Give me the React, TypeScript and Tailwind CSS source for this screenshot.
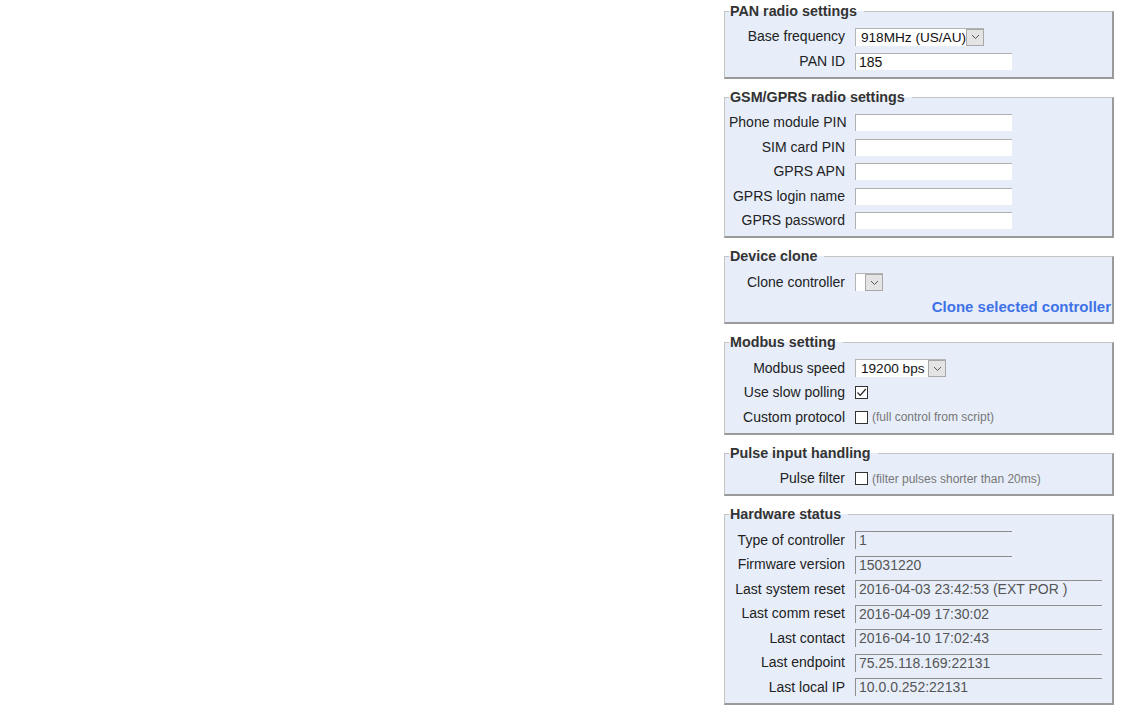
import React from "react";

const font = { fontFamily: '"Liberation Sans", Arial, sans-serif' };

function Arrow() {
  return (
    <span className="flex h-full w-[18px] shrink-0 items-center justify-center border border-[#a8a8a8] bg-[#e4e4e4]">
      <svg width="9" height="6" viewBox="0 0 9 6">
        <path d="M1 1 L4.5 4.5 L8 1" fill="none" stroke="#555" strokeWidth="1" />
      </svg>
    </span>
  );
}

function Select({ value, w }: { value: string; w: string }) {
  return (
    <div className={`flex h-[18px] items-stretch border-l border-t border-[#b4b4b4] bg-white ${w}`}>
      <span className="min-w-0 flex-1 overflow-hidden whitespace-nowrap pl-[5px] text-[13.6px] leading-[17px] text-[#111]">
        {value}
      </span>
      <Arrow />
    </div>
  );
}

function Input({ value = "" }: { value?: string }) {
  return (
    <div className="h-[17px] w-[157px] border-l border-t border-[#b0b0b0] bg-white pl-[3px] text-[14px] leading-[16px] text-[#111]">
      {value}
    </div>
  );
}

function ReadOnly({ value, wide }: { value: string; wide?: boolean }) {
  return (
    <div
      className={`h-[18px] border-l border-t-[1.5px] border-[#8e8e8e] pl-[3px] text-[14px] leading-[16px] text-[#555] ${
        wide ? "w-[247px]" : "w-[157px]"
      }`}
    >
      {value}
    </div>
  );
}

function Check({ checked }: { checked?: boolean }) {
  return (
    <span className="flex h-[13px] w-[13px] items-center justify-center border border-[#333] bg-white">
      {checked && (
        <svg width="11" height="11" viewBox="0 0 11 11">
          <path d="M1.5 5.5 L4.2 8.3 L9.8 2" fill="none" stroke="#222" strokeWidth="1.2" />
        </svg>
      )}
    </span>
  );
}

function Row({ label, children }: { label: string; children?: React.ReactNode }) {
  return (
    <div className="flex h-[24.5px] items-center">
      <span className="w-[116px] whitespace-nowrap text-right text-[14px] text-[#222]">{label}</span>
      <div className="ml-[10px] flex items-center">{children}</div>
    </div>
  );
}

function Box({ title, children }: { title: string; children: React.ReactNode }) {
  return (
    <fieldset className="mb-[10px] w-[390px] border-b-2 border-l border-r-2 border-t border-b-[#9a9a9a] border-l-[#c4c4c4] border-r-[#9a9a9a] border-t-[#c4c4c4] bg-[#e7eefa] px-[4px]">
      <legend className="pl-[1px] pr-[7px] text-[14.3px] font-bold leading-[17px] text-[#333]">{title}</legend>
      <div className="pb-[3px] pt-[5px]">{children}</div>
    </fieldset>
  );
}

export default function App() {
  return (
    <div className="min-h-[714px] bg-white pl-[724px] pt-[2.5px]" style={font}>
      <Box title="PAN radio settings">
        <Row label="Base frequency">
          <Select value="918MHz (US/AU)" w="w-[129px]" />
        </Row>
        <Row label="PAN ID">
          <Input value="185" />
        </Row>
      </Box>

      <Box title="GSM/GPRS radio settings">
        <Row label="Phone module PIN">
          <Input />
        </Row>
        <Row label="SIM card PIN">
          <Input />
        </Row>
        <Row label="GPRS APN">
          <Input />
        </Row>
        <Row label="GPRS login name">
          <Input />
        </Row>
        <Row label="GPRS password">
          <Input />
        </Row>
      </Box>

      <Box title="Device clone">
        <Row label="Clone controller">
          <Select value="" w="w-[28px]" />
        </Row>
        <div className="-mr-[3px] flex h-[24.5px] items-center justify-end">
          <a className="cursor-pointer whitespace-nowrap text-[15px] font-bold text-[#3f72e6]">Clone selected controller</a>
        </div>
      </Box>

      <Box title="Modbus setting">
        <Row label="Modbus speed">
          <Select value="19200 bps" w="w-[91px]" />
        </Row>
        <Row label="Use slow polling">
          <Check checked />
        </Row>
        <Row label="Custom protocol">
          <Check />
          <span className="ml-[4px] text-[12px] text-[#777]">(full control from script)</span>
        </Row>
      </Box>

      <Box title="Pulse input handling">
        <Row label="Pulse filter">
          <Check />
          <span className="ml-[4px] text-[12px] text-[#777]">(filter pulses shorter than 20ms)</span>
        </Row>
      </Box>

      <Box title="Hardware status">
        <Row label="Type of controller">
          <ReadOnly value="1" />
        </Row>
        <Row label="Firmware version">
          <ReadOnly value="15031220" />
        </Row>
        <Row label="Last system reset">
          <ReadOnly value="2016-04-03 23:42:53 (EXT POR )" wide />
        </Row>
        <Row label="Last comm reset">
          <ReadOnly value="2016-04-09 17:30:02" wide />
        </Row>
        <Row label="Last contact">
          <ReadOnly value="2016-04-10 17:02:43" wide />
        </Row>
        <Row label="Last endpoint">
          <ReadOnly value="75.25.118.169:22131" wide />
        </Row>
        <Row label="Last local IP">
          <ReadOnly value="10.0.0.252:22131" wide />
        </Row>
      </Box>
    </div>
  );
}
